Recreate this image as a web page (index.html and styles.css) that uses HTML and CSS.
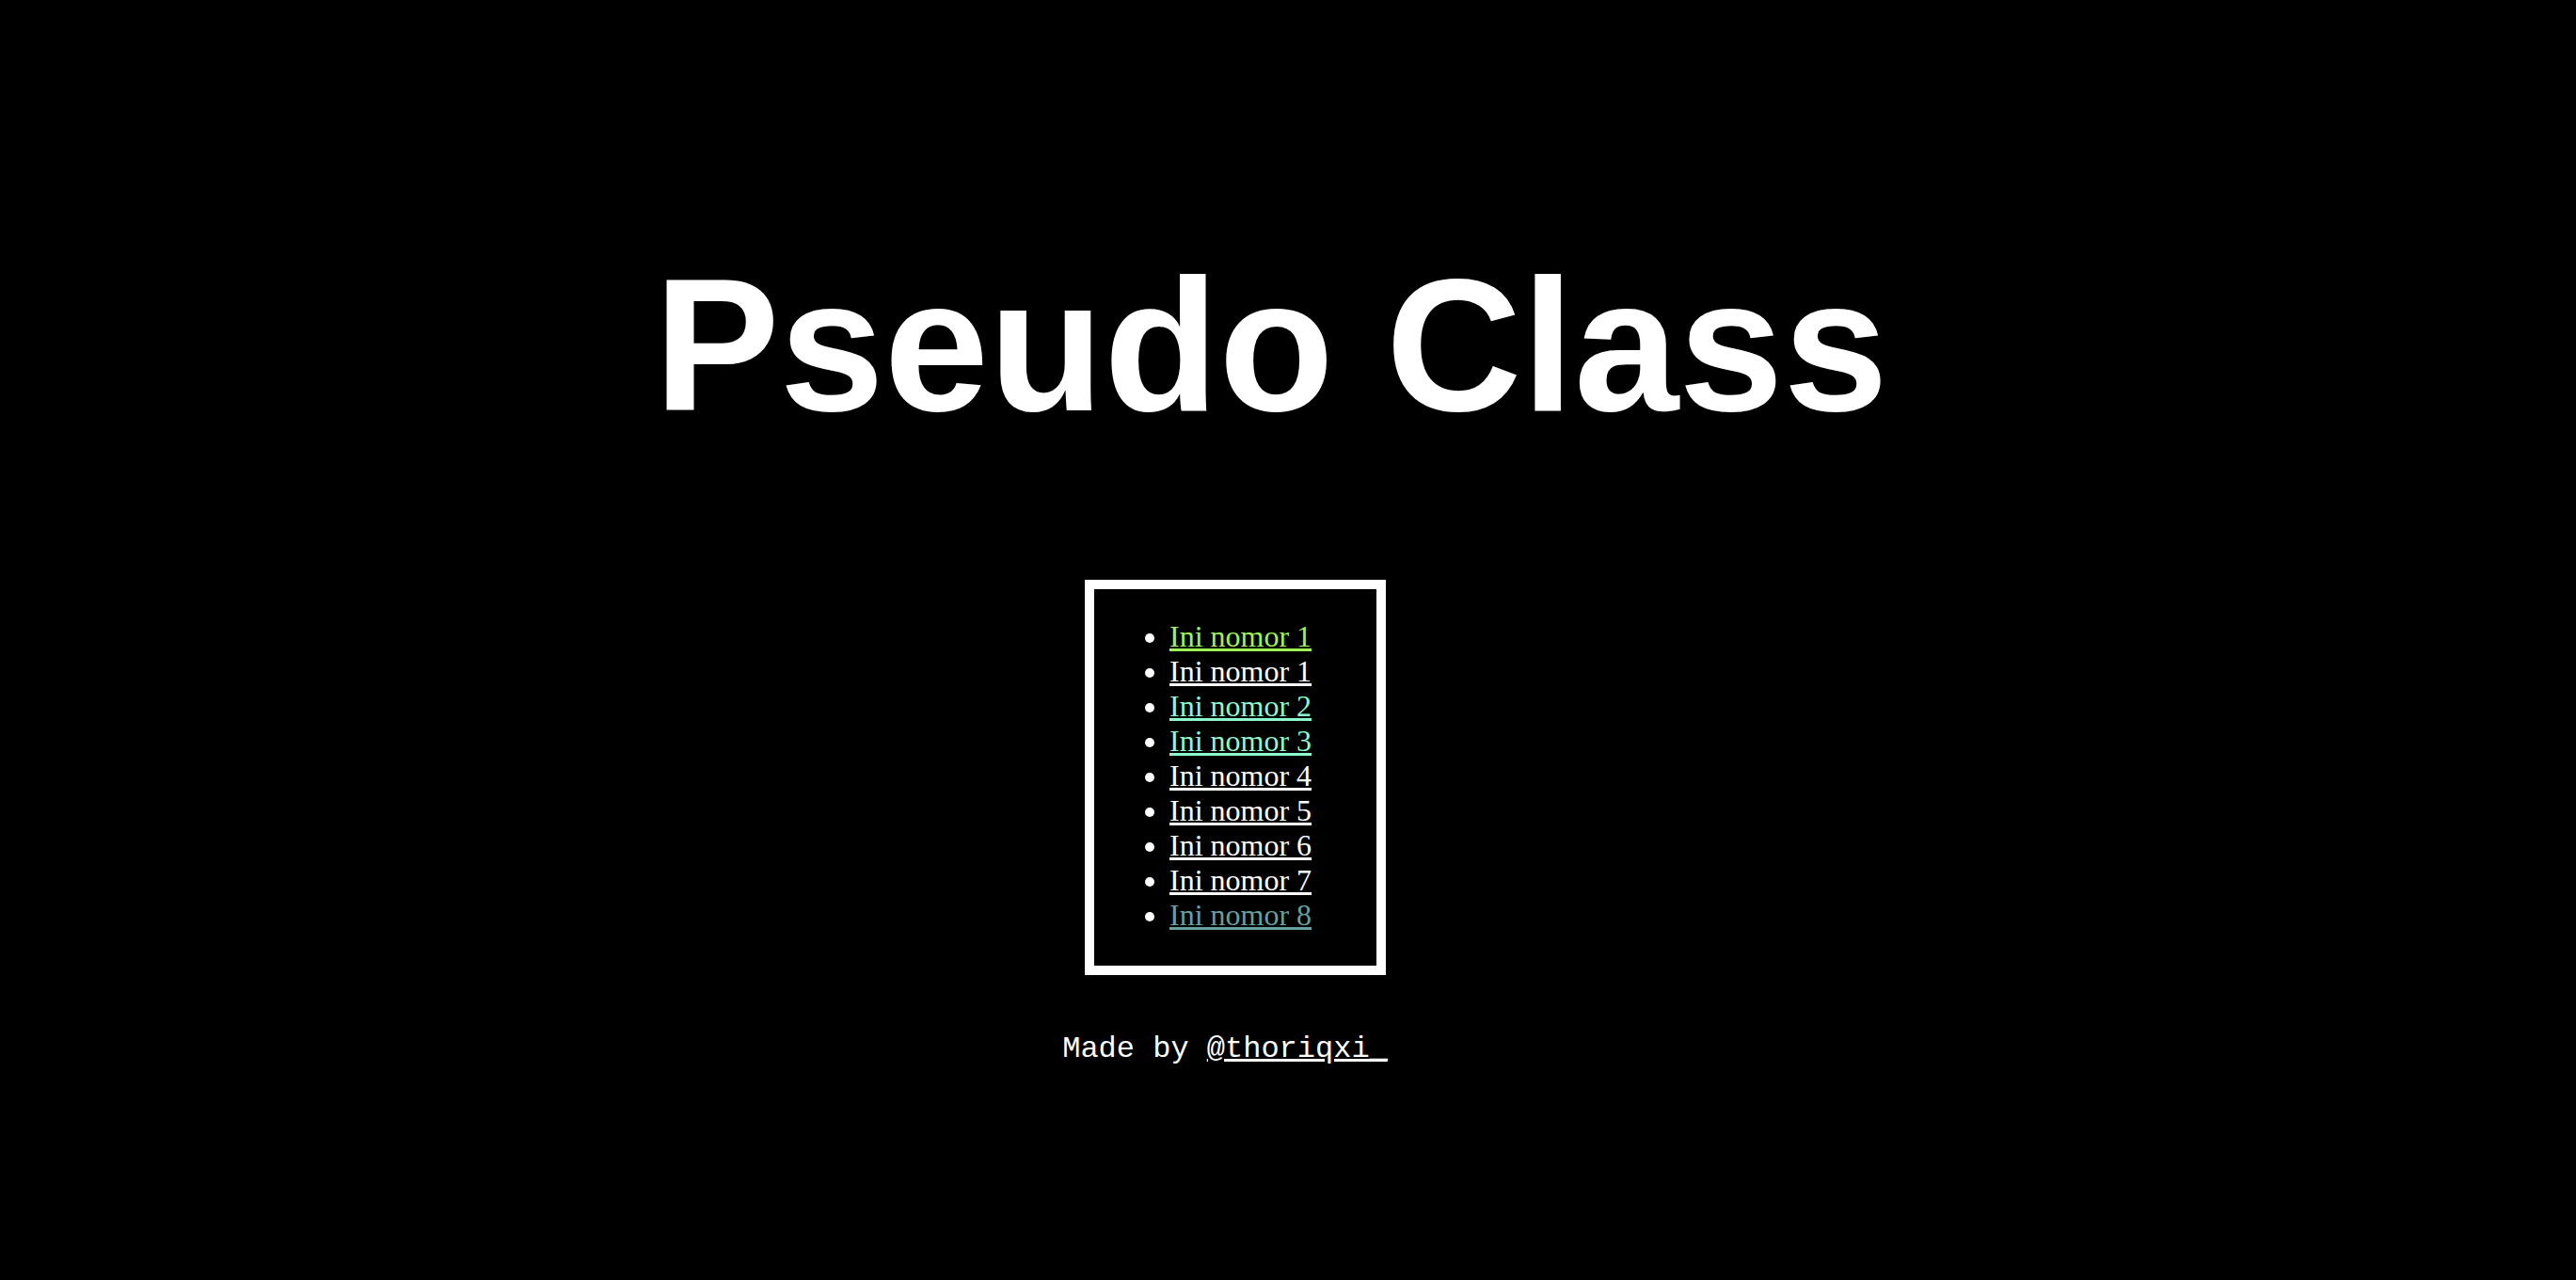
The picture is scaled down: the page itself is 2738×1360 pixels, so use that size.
FILE: index.html
```html
<!DOCTYPE html>
<html lang="id">
<head>
<meta charset="utf-8">
<title>Pseudo Class</title>
<link rel="stylesheet" href="styles.css">
</head>
<body>
<main class="page">
  <h1 class="title">Pseudo Class</h1>
  <div class="box">
    <ul class="list">
      <li><a class="link link-lime" href="#">Ini nomor 1</a></li>
      <li><a class="link" href="#">Ini nomor 1</a></li>
      <li><a class="link link-aqua" href="#">Ini nomor 2</a></li>
      <li><a class="link link-aqua" href="#">Ini nomor 3</a></li>
      <li><a class="link" href="#">Ini nomor 4</a></li>
      <li><a class="link" href="#">Ini nomor 5</a></li>
      <li><a class="link" href="#">Ini nomor 6</a></li>
      <li><a class="link" href="#">Ini nomor 7</a></li>
      <li><a class="link link-cadet" href="#">Ini nomor 8</a></li>
    </ul>
  </div>
  <p class="credit">Made by <a class="credit-link" href="#">@thoriqxi_</a></p>
</main>
</body>
</html>
```

FILE: styles.css
```css
html, body {
  margin: 0;
  padding: 0;
  background: #000;
  color: #fff;
}

.page {
  display: flex;
  flex-direction: column;
  align-items: center;
  padding-top: 252px;
  min-height: 1360px;
  box-sizing: border-box;
}

.title {
  margin: 0 36px 0 0;
  font-family: "Liberation Sans", Arial, sans-serif;
  font-weight: bold;
  font-size: 200px;
  line-height: normal;
  color: #fff;
}

.box {
  box-sizing: border-box;
  width: 320px;
  height: 420px;
  margin: 134px 112px 0 0;
  border: 10px solid #fff;
  padding: 0 40px;
}

.list {
  margin: 32px 0;
  padding-left: 40px;
  font-family: "Liberation Serif", "Times New Roman", serif;
  font-size: 32px;
  line-height: normal;
  color: #fff;
}

.link {
  color: #fff;
  text-decoration: underline;
}

.link-lime {
  color: #9ef552;
}

.link-aqua {
  color: #8cf9cc;
}

.link-cadet {
  color: #64a0a0;
}

.credit {
  margin: 60px 134px 0 0;
  font-family: "Liberation Mono", "Courier New", monospace;
  font-size: 32px;
  line-height: normal;
  color: #fff;
}

.credit-link {
  color: #fff;
  text-decoration: underline;
}
```
